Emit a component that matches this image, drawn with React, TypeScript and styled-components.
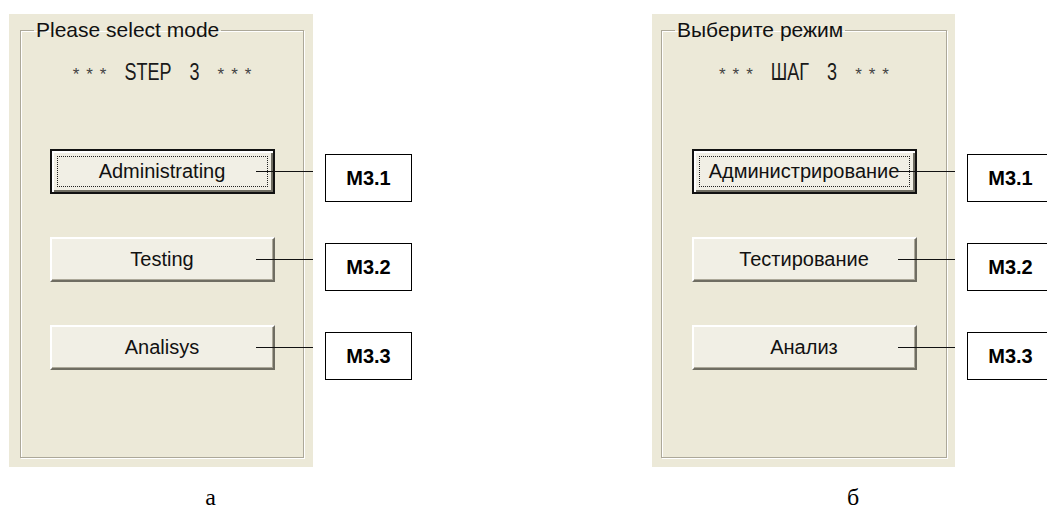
import React from "react";
import styled, { createGlobalStyle } from "styled-components";

const GlobalStyle = createGlobalStyle`
  html, body {
    margin: 0;
    padding: 0;
    background: #ffffff;
    overflow: hidden;
  }
  body {
    font-family: "Liberation Sans", Arial, sans-serif;
  }
`;

const Page = styled.div`
  display: flex;
  align-items: flex-start;
  gap: 240px;
  padding: 14px 0 0 9px;
  width: 1200px;
`;

const Figure = styled.div`
  display: flex;
  flex-direction: column;
`;

const Row = styled.div`
  display: flex;
  gap: 12px;
`;

const Panel = styled.div<{ $width: number; $padLeft: number; $padRight: number }>`
  box-sizing: border-box;
  width: ${(p) => p.$width}px;
  height: 453px;
  background: #ece9d8;
  padding: 6px ${(p) => p.$padRight}px 9px ${(p) => p.$padLeft}px;
`;

const GroupBox = styled.fieldset`
  box-sizing: border-box;
  height: 100%;
  margin: 0;
  padding: 0;
  min-width: 0;
  border: 1px solid #aca899;
  box-shadow: inset 1px 1px 0 #ffffff, 1px 1px 0 #ffffff;
  display: flex;
  flex-direction: column;
  align-items: center;
`;

const Legend = styled.legend`
  margin-left: 13px;
  padding: 0 2px;
  font-family: "Liberation Sans", Arial, sans-serif;
  font-size: 21px;
  line-height: 20px;
  color: #111;
`;

const Title = styled.div`
  display: flex;
  align-items: baseline;
  gap: 18px;
  margin-top: 18px;
  height: 28px;
  font-family: "Liberation Sans", Arial, sans-serif;
  font-size: 18px;
  line-height: 28px;
  color: #1a1a1a;
`;

const Stars = styled.span`
  display: inline-block;
  letter-spacing: 7px;
  margin-right: -7px;
  font-size: 17px;
  color: #444;
  transform: translateY(2px);
`;

const Word = styled.span`
  display: inline-block;
  transform: scaleY(1.3);
`;

const ButtonList = styled.div`
  display: flex;
  flex-direction: column;
  gap: 43px;
  margin-top: 63px;
`;

const ButtonSlot = styled.div`
  position: relative;
  width: 225px;
  height: 45px;
`;

const WinButton = styled.button<{ $default?: boolean }>`
  position: relative;
  box-sizing: border-box;
  width: 100%;
  height: 100%;
  margin: 0;
  padding: 0;
  background: #f1efe5;
  font-family: "Liberation Sans", Arial, sans-serif;
  font-size: 20px;
  color: #111;
  cursor: default;
  border-style: solid;
  border-width: 2px;
  border-color: ${(p) =>
    p.$default ? "#111 #111 #111 #111" : "#ffffff #6f6d62 #6f6d62 #ffffff"};
  box-shadow: ${(p) =>
    p.$default
      ? "inset 2px 2px 0 #ffffff, inset -2px -2px 0 #6f6d62"
      : "inset -1px -1px 0 #aca899"};
  &::after {
    content: "";
    display: ${(p) => (p.$default ? "block" : "none")};
    position: absolute;
    inset: 5px;
    border: 1px dotted #222;
  }
`;

const Connector = styled.span`
  position: absolute;
  top: 50%;
  left: calc(100% - 19px);
  width: 57px;
  height: 1.5px;
  margin-top: -1px;
  background: #111;
  pointer-events: none;
`;

const LabelColumn = styled.div`
  display: flex;
  flex-direction: column;
  gap: 41px;
  padding-top: 140px;
`;

const LabelBox = styled.div`
  box-sizing: border-box;
  width: 87px;
  height: 48px;
  border: 1.5px solid #000;
  display: flex;
  align-items: center;
  justify-content: center;
  font-family: "Liberation Sans", Arial, sans-serif;
  font-weight: bold;
  font-size: 20px;
  color: #000;
  background: #fff;
`;

const Caption = styled.div`
  margin-top: 16px;
  text-align: center;
  font-family: "Liberation Serif", "Times New Roman", serif;
  font-size: 24px;
  line-height: 28px;
  color: #000;
`;

type Item = { text: string; label: string; isDefault?: boolean };

type FigureProps = {
  legend: string;
  step: string;
  items: Item[];
  caption: string;
  width: number;
  padLeft: number;
  padRight: number;
};

function DialogFigure({ legend, step, items, caption, width, padLeft, padRight }: FigureProps) {
  return (
    <Figure>
      <Row>
        <Panel $width={width} $padLeft={padLeft} $padRight={padRight}>
          <GroupBox>
            <Legend>{legend}</Legend>
            <Title>
              <Stars>***</Stars>
              <Word>{step}</Word>
              <Word>3</Word>
              <Stars>***</Stars>
            </Title>
            <ButtonList>
              {items.map((it) => (
                <ButtonSlot key={it.label}>
                  <WinButton $default={it.isDefault}>{it.text}</WinButton>
                  <Connector />
                </ButtonSlot>
              ))}
            </ButtonList>
          </GroupBox>
        </Panel>
        <LabelColumn>
          {items.map((it) => (
            <LabelBox key={it.label}>{it.label}</LabelBox>
          ))}
        </LabelColumn>
      </Row>
      <Caption>{caption}</Caption>
    </Figure>
  );
}

export default function App() {
  return (
    <>
      <GlobalStyle />
      <Page>
        <DialogFigure
          legend="Please select mode"
          step="STEP"
          caption="а"
          width={304}
          padLeft={11}
          padRight={9}
          items={[
            { text: "Administrating", label: "M3.1", isDefault: true },
            { text: "Testing", label: "M3.2" },
            { text: "Analisys", label: "M3.3" },
          ]}
        />
        <DialogFigure
          legend="Выберите режим"
          step="ШАГ"
          caption="б"
          width={303}
          padLeft={9}
          padRight={8}
          items={[
            { text: "Администрирование", label: "M3.1", isDefault: true },
            { text: "Тестирование", label: "M3.2" },
            { text: "Анализ", label: "M3.3" },
          ]}
        />
      </Page>
    </>
  );
}
